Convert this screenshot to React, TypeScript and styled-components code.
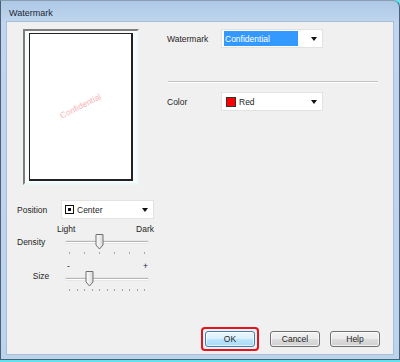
import styled, { createGlobalStyle } from "styled-components"

const GlobalStyle = createGlobalStyle`
  html, body { margin: 0; padding: 0; }
  body {
    background: #5fe3ef;
    font-family: "Liberation Sans", Arial, sans-serif;
    color: #1e1e1e;
  }
`;

const Window = styled.div`
  width: 400px;
  height: 360px;
  box-sizing: border-box;
  border: 1px solid #4d5f73;
  border-top-color: #8a9cb0;
  border-radius: 0 7px 0 0;
  background: linear-gradient(to bottom, #adc8e6 0px, #c0d6ee 22px, #bcd3ec 100%);
  padding: 0 5px 4px 5px;
  display: flex;
  flex-direction: column;
  overflow: hidden;
`;

const TitleBar = styled.div`
  height: 20px;
  box-sizing: border-box;
  padding: 3px 0 0 3px;
  display: flex;
  align-items: center;
  font-size: 9px;
  color: #1b2733;
`;

const Client = styled.div`
  flex: 1;
  background: #f0f0f0;
  border: 1px solid #a9bfd8;
  display: flex;
  flex-direction: column;
  padding: 7px 13px 3px 10px;
`;

const Top = styled.div`
  display: flex;
`;

const LeftCol = styled.div`
  width: 150px;
  display: flex;
  flex-direction: column;
`;

const RightCol = styled.div`
  display: flex;
  flex-direction: column;
  width: 212px;
`;

const PreviewFrame = styled.div`
  margin-left: 6px;
  width: 116px;
  height: 156px;
  box-sizing: border-box;
  border: 2px solid #e9f7f8;
  border-top-color: #7d7d7d;
  border-left-color: #7d7d7d;
  background: #f7fbfb;
  padding: 2px 4px;
`;

const Page = styled.div`
  height: 100%;
  box-sizing: border-box;
  background: #fff;
  border: 1px solid #222;
  border-right-width: 2px;
  border-bottom-width: 2px;
  display: flex;
  align-items: center;
  justify-content: center;
`;

const WatermarkText = styled.span`
  font-size: 8.5px;
  color: #f7b3ba;
  transform: rotate(-27deg);
  margin-top: -2px;
`;

const Label = styled.span<{ w: number }>`
  width: ${p => p.w}px;
  flex: none;
  font-size: 8.5px;
`;

const FieldRow = styled.div<{ top?: number }>`
  display: flex;
  align-items: center;
  margin-top: ${p => p.top ?? 0}px;
`;

const Select = styled.div<{ w: number }>`
  width: ${p => p.w}px;
  height: 19px;
  box-sizing: border-box;
  background: #fff;
  border: 1px solid #e2e2e2;
  display: flex;
  align-items: center;
  padding: 0 5px 0 2px;
  font-size: 8.5px;
  gap: 3px;
`;

const SelectValue = styled.span<{ selected?: boolean }>`
  flex: 1;
  align-self: stretch;
  display: flex;
  align-items: center;
  padding-left: ${p => (p.selected ? 1 : 0)}px;
  margin: 1px 10px 1px 0;
  background: ${p => (p.selected ? "#3399ff" : "transparent")};
  color: ${p => (p.selected ? "#fff" : "#1e1e1e")};
`;

const Arrow = styled.span`
  width: 0;
  height: 0;
  border-left: 3.5px solid transparent;
  border-right: 3.5px solid transparent;
  border-top: 4px solid #111;
  margin-top: 1px;
`;

const Swatch = styled.span<{ color: string }>`
  width: 10px;
  height: 10px;
  box-sizing: border-box;
  border: 1px solid #333;
  background: ${p => p.color};
  margin-left: 2px;
  flex: none;
`;

const PosIcon = styled.span`
  width: 9px;
  height: 9px;
  box-sizing: border-box;
  border: 1px solid #111;
  display: flex;
  align-items: center;
  justify-content: center;
  margin-left: 1px;
  flex: none;
  &::after {
    content: "";
    width: 3px;
    height: 3px;
    background: #111;
  }
`;

const Separator = styled.div`
  margin: 33px 0 0 1px;
  width: 210px;
  height: 1px;
  background: #c2c2c2;
  border-bottom: 1px solid #fff;
`;

const SliderGrid = styled.div<{ top: number }>`
  display: grid;
  grid-template-columns: 48px 84px;
  grid-template-rows: 10px 21px;
  margin-top: ${p => p.top}px;
`;

const Captions = styled.div<{ inset: number; over: number }>`
  grid-column: 2;
  grid-row: 1;
  display: flex;
  justify-content: space-between;
  align-items: center;
  margin: 0 ${p => -p.over}px 0 ${p => -p.inset}px;
  font-size: 8.5px;
  line-height: 10px;
`;

const SliderLabel = styled.span<{ row: string; align: string; shift: number }>`
  grid-column: 1;
  grid-row: ${p => p.row};
  align-self: ${p => p.align};
  margin-top: ${p => p.shift}px;
  font-size: 8.5px;
`;

const SliderBox = styled.div`
  grid-column: 2;
  grid-row: 2;
  position: relative;
  padding-top: 7px;
`;

const Track = styled.div`
  margin: 0 1px;
  height: 1px;
  background: #b6b6b6;
  border-bottom: 1px solid #fff;
  box-shadow: 0 0 0 0.5px #dcdcdc;
`;

const Ticks = styled.div`
  display: flex;
  justify-content: space-between;
  margin: 9px 4px 0 4px;
`;

const Tick = styled.span`
  width: 1px;
  height: 2px;
  background: #a8a8a8;
`;

const Thumb = styled.svg`
  position: absolute;
  top: 0;
  width: 9px;
  height: 16px;
`;

const ButtonRow = styled.div`
  margin-top: auto;
  display: flex;
  justify-content: flex-end;
  align-items: center;
  gap: 10px;
`;

const FocusRing = styled.span`
  border: 2px solid #e4131c;
  border-radius: 4px;
  padding: 2px;
  display: flex;
  margin-right: 1px;
`;

const Button = styled.button<{ primary?: boolean }>`
  width: 50px;
  height: 16px;
  box-sizing: border-box;
  padding: 0;
  font-family: "Liberation Sans", Arial, sans-serif;
  font-size: 8.5px;
  color: #1e1e1e;
  border: 1px solid ${p => (p.primary ? "#3c7fb1" : "#707070")};
  border-radius: 3px;
  background: ${p =>
    p.primary
      ? "linear-gradient(to bottom, #eaf6fd 0%, #d9f0fc 50%, #bee6fd 50%, #a7d9f5 100%)"
      : "linear-gradient(to bottom, #f2f2f2 0%, #ebebeb 50%, #dddddd 50%, #cfcfcf 100%)"};
  box-shadow: inset 0 0 0 1px rgba(255, 255, 255, 0.7);
`;

const Slider = ({ ticks, value }: { ticks: number; value: number }) => (
  <SliderBox>
    <Track />
    <Ticks>
      {Array.from({ length: ticks }).map((_, i) => <Tick key={i} />)}
    </Ticks>
    <Thumb viewBox="0 0 9 16" style={{ left: 4 + value * 74 - 4.5 + 1 }}>
      <defs>
        <linearGradient id="thumbFill" x1="0" x2="1" y1="0" y2="0">
          <stop offset="0" stopColor="#ffffff" />
          <stop offset="1" stopColor="#dadada" />
        </linearGradient>
      </defs>
      <path d="M1 0.5 H8 V11 L4.5 15 L1 11 Z" fill="url(#thumbFill)" stroke="#6f6f6f" strokeWidth="1" />
    </Thumb>
  </SliderBox>
);

export default function App() {
  return (
    <>
      <GlobalStyle />
      <Window>
        <TitleBar>Watermark</TitleBar>
        <Client>
          <Top>
            <LeftCol>
              <PreviewFrame>
                <Page>
                  <WatermarkText>Confidential</WatermarkText>
                </Page>
              </PreviewFrame>
              <FieldRow top={15}>
                <Label w={44}>Position</Label>
                <Select w={93}>
                  <PosIcon />
                  <SelectValue>Center</SelectValue>
                  <Arrow />
                </Select>
              </FieldRow>
              <SliderGrid top={5}>
                <Captions inset={8} over={5}>
                  <span>Light</span>
                  <span>Dark</span>
                </Captions>
                <SliderLabel row="2" align="start" shift={3}>Density</SliderLabel>
                <Slider ticks={6} value={0.4} />
              </SliderGrid>
              <SliderGrid top={6}>
                <Captions inset={-2} over={-1}>
                  <span>-</span>
                  <span>+</span>
                </Captions>
                <SliderLabel row="1 / 3" align="center" shift={-2}>Size</SliderLabel>
                <Slider ticks={11} value={0.26} />
              </SliderGrid>
            </LeftCol>
            <RightCol>
              <FieldRow>
                <Label w={54}>Watermark</Label>
                <Select w={102}>
                  <SelectValue selected>Confidential</SelectValue>
                  <Arrow />
                </Select>
              </FieldRow>
              <Separator />
              <FieldRow top={9}>
                <Label w={54}>Color</Label>
                <Select w={102}>
                  <Swatch color="#ff0000" />
                  <SelectValue>Red</SelectValue>
                  <Arrow />
                </Select>
              </FieldRow>
            </RightCol>
          </Top>
          <ButtonRow>
            <FocusRing>
              <Button primary>OK</Button>
            </FocusRing>
            <Button>Cancel</Button>
            <Button>Help</Button>
          </ButtonRow>
        </Client>
      </Window>
    </>
  );
}
